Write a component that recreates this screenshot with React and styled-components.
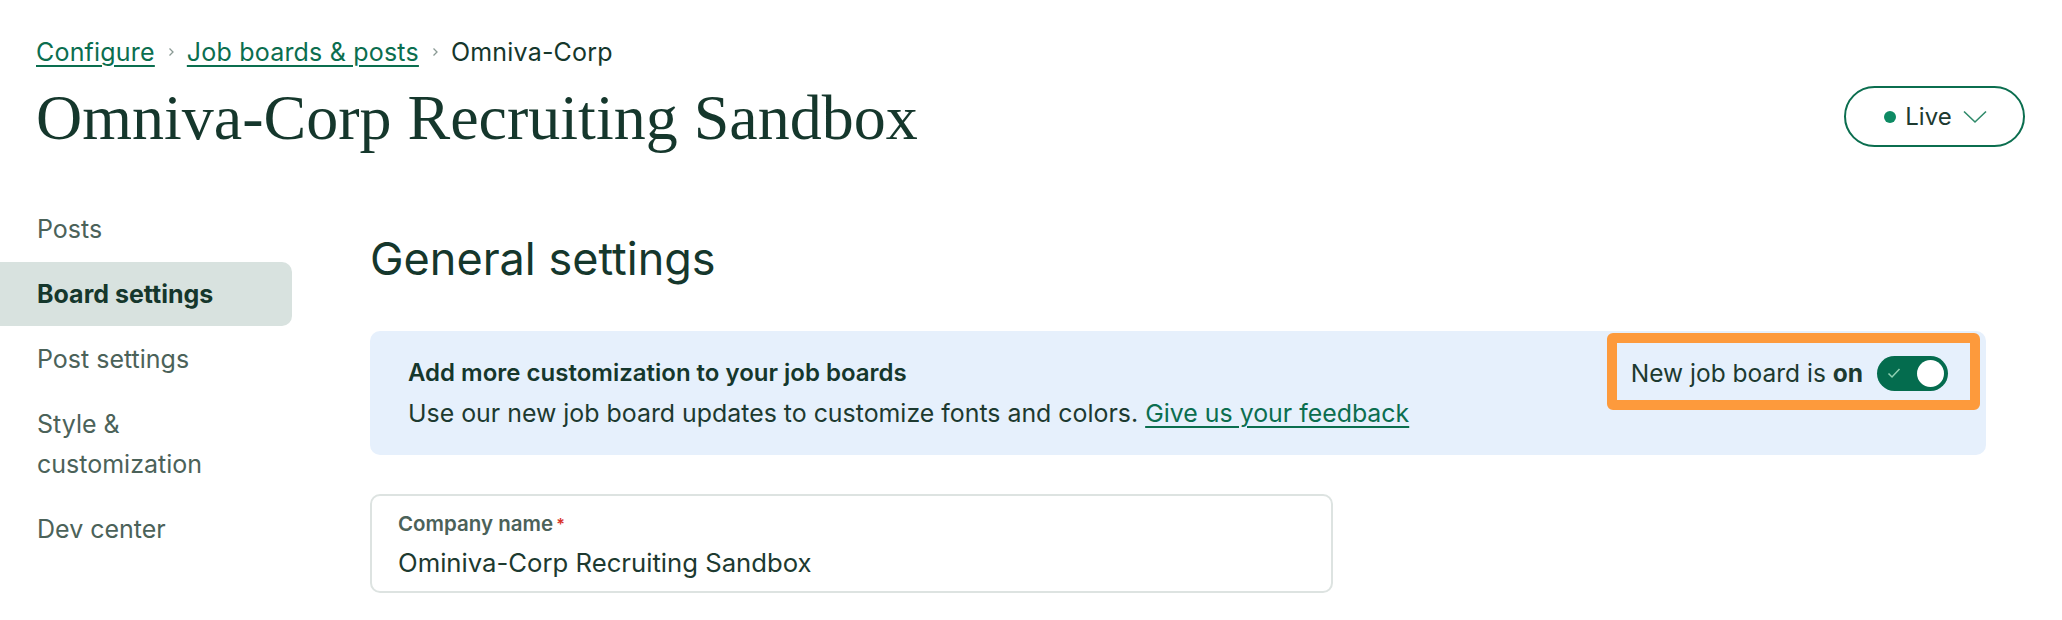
import React from "react";
import styled, { createGlobalStyle } from "styled-components";

const GlobalStyle = createGlobalStyle`
  html, body {
    margin: 0;
    padding: 0;
    background: #ffffff;
  }
  body {
    font-family: Inter, "Noto Sans", "Liberation Sans", sans-serif;
    color: #15372c;
  }
`;

const Page = styled.div`
  width: 2062px;
  height: 620px;
  overflow: hidden;
  box-sizing: border-box;
  padding-top: 36px;
`;

const Header = styled.header`
  padding: 0 37px 0 36px;
`;

const Crumbs = styled.nav`
  display: flex;
  align-items: center;
  gap: 11px;
  font-size: 25px;
  letter-spacing: 0.2px;
  line-height: 32px;
  height: 32px;
`;

const CrumbLink = styled.a`
  color: #0b6e4f;
  text-decoration: underline;
  text-decoration-thickness: 2px;
  text-underline-offset: 4px;
`;

const CrumbCurrent = styled.span`
  color: #15372c;
`;

const CrumbSep = styled.svg`
  width: 10px;
  height: 10px;
  color: #8a9a94;
`;

const TitleRow = styled.div`
  display: flex;
  align-items: center;
  justify-content: space-between;
  margin-top: 10px;
  height: 80px;
`;

const Title = styled.h1`
  margin: 0;
  font-family: "Liberation Serif", "DejaVu Serif", serif;
  font-weight: 400;
  font-size: 64px;
  line-height: 80px;
  color: #15372c;
`;

const StatusButton = styled.button`
  display: flex;
  align-items: center;
  justify-content: center;
  gap: 9px;
  width: 181px;
  height: 61px;
  margin-top: -3px;
  border: 2px solid #0b6e4f;
  border-radius: 31px;
  background: #fff;
  font-family: inherit;
  font-size: 24px;
  color: #1d3a30;
  padding: 0 0 0 2px;
`;

const Dot = styled.span`
  width: 12px;
  height: 12px;
  border-radius: 50%;
  background: #0d8a63;
`;

const Body = styled.div`
  display: grid;
  grid-template-columns: 292px 1fr;
  column-gap: 78px;
  margin-top: 39px;
  padding-right: 76px;
`;

const SideNav = styled.ul`
  list-style: none;
  margin: 0;
  padding: 0;
`;

const NavItem = styled.li`
  padding: 12px 20px 12px 37px;
  margin-bottom: 1px;
  font-size: 25px;
  line-height: 40px;
  border-radius: 0 10px 10px 0;
  color: ${(p) => (p.$active ? "#15372c" : "#4b6259")};
  font-weight: ${(p) => (p.$active ? 700 : 400)};
  background: ${(p) => (p.$active ? "#d8e2df" : "transparent")};
`;

const Main = styled.main`
  padding-top: 34px;
`;

const SectionTitle = styled.h2`
  margin: 0;
  font-weight: 400;
  font-size: 45px;
  line-height: 56px;
  color: #15372c;
`;

const Banner = styled.div`
  display: flex;
  justify-content: space-between;
  align-items: flex-start;
  margin-top: 44px;
  padding: 22px 38px 22px 38px;
  background: #e6f0fc;
  border-radius: 10px;
`;

const BannerText = styled.div`
  font-size: 24.9px;
  line-height: 40px;
  color: #1d3a30;
`;

const BannerTitle = styled.div`
  font-size: 24px;
  font-weight: 600;
  color: #15372c;
`;

const FeedbackLink = styled.a`
  color: #0b6e4f;
  text-decoration: underline;
  text-decoration-thickness: 2px;
  text-underline-offset: 4px;
`;

const ToggleGroup = styled.label`
  position: relative;
  display: flex;
  align-items: center;
  gap: 14px;
  height: 40px;
  font-size: 24.5px;
  color: #1d3a30;
  white-space: nowrap;
`;

const Highlight = styled.span`
  position: absolute;
  top: -20px;
  left: -24px;
  right: -32px;
  bottom: -17px;
  border: 10px solid #fd9a3c;
  border-radius: 6px;
  pointer-events: none;
`;

const Track = styled.span`
  display: flex;
  align-items: center;
  justify-content: space-between;
  box-sizing: border-box;
  width: 71px;
  height: 35px;
  padding: 0 4px 0 10px;
  border-radius: 18px;
  background: #046c4e;
`;

const Knob = styled.span`
  width: 27px;
  height: 27px;
  border-radius: 50%;
  background: #fff;
`;

const Field = styled.div`
  box-sizing: border-box;
  width: 963px;
  height: 99px;
  margin-top: 39px;
  padding: 14px 26px 0;
  border: 2px solid #dde3e1;
  border-radius: 10px;
`;

const FieldLabel = styled.div`
  font-size: 20.5px;
  line-height: 28px;
  font-weight: 600;
  color: #4b6259;
`;

const Required = styled.span`
  color: #d9342b;
  margin-left: 3px;
  font-size: 16px;
  vertical-align: top;
`;

const FieldValue = styled.div`
  margin-top: 6px;
  font-size: 25.7px;
  line-height: 38px;
  color: #1d3a30;
`;

const Chevron = () => (
  <CrumbSep viewBox="0 0 10 10" fill="none">
    <path d="M3.5 1.5 L7 5 L3.5 8.5" stroke="currentColor" strokeWidth="1.3" />
  </CrumbSep>
);

const navItems = [
  "Posts",
  "Board settings",
  "Post settings",
  "Style & customization",
  "Dev center",
];

export default function App() {
  return (
    <Page>
      <GlobalStyle />
      <Header>
        <Crumbs>
          <CrumbLink href="#">Configure</CrumbLink>
          <Chevron />
          <CrumbLink href="#">Job boards &amp; posts</CrumbLink>
          <Chevron />
          <CrumbCurrent>Omniva-Corp</CrumbCurrent>
        </Crumbs>
        <TitleRow>
          <Title>Omniva-Corp Recruiting Sandbox</Title>
          <StatusButton>
            <Dot />
            Live
            <svg width="24" height="14" viewBox="0 0 24 14" fill="none" style={{ marginLeft: 2 }}>
              <path d="M1 1.5 L12 12 L23 1.5" stroke="#2f8a6a" strokeWidth="1.6" />
            </svg>
          </StatusButton>
        </TitleRow>
      </Header>
      <Body>
        <SideNav>
          {navItems.map((item) => (
            <NavItem key={item} $active={item === "Board settings"}>
              {item === "Style & customization" ? (
                <>
                  Style &amp;
                  <br />
                  customization
                </>
              ) : (
                item
              )}
            </NavItem>
          ))}
        </SideNav>
        <Main>
          <SectionTitle>General settings</SectionTitle>
          <Banner>
            <BannerText>
              <BannerTitle>Add more customization to your job boards</BannerTitle>
              <div>
                Use our new job board updates to customize fonts and colors.{" "}
                <FeedbackLink href="#">Give us your feedback</FeedbackLink>
              </div>
            </BannerText>
            <ToggleGroup>
              <span>
                New job board is <b>on</b>
              </span>
              <Track>
                <svg width="14" height="12" viewBox="0 0 14 12" fill="none">
                  <path d="M1.5 6.5 L5 10 L12.5 2" stroke="#8fd0b2" strokeWidth="1.5" />
                </svg>
                <Knob />
              </Track>
              <Highlight />
            </ToggleGroup>
          </Banner>
          <Field>
            <FieldLabel>
              Company name<Required>*</Required>
            </FieldLabel>
            <FieldValue>Ominiva-Corp Recruiting Sandbox</FieldValue>
          </Field>
        </Main>
      </Body>
    </Page>
  );
}
